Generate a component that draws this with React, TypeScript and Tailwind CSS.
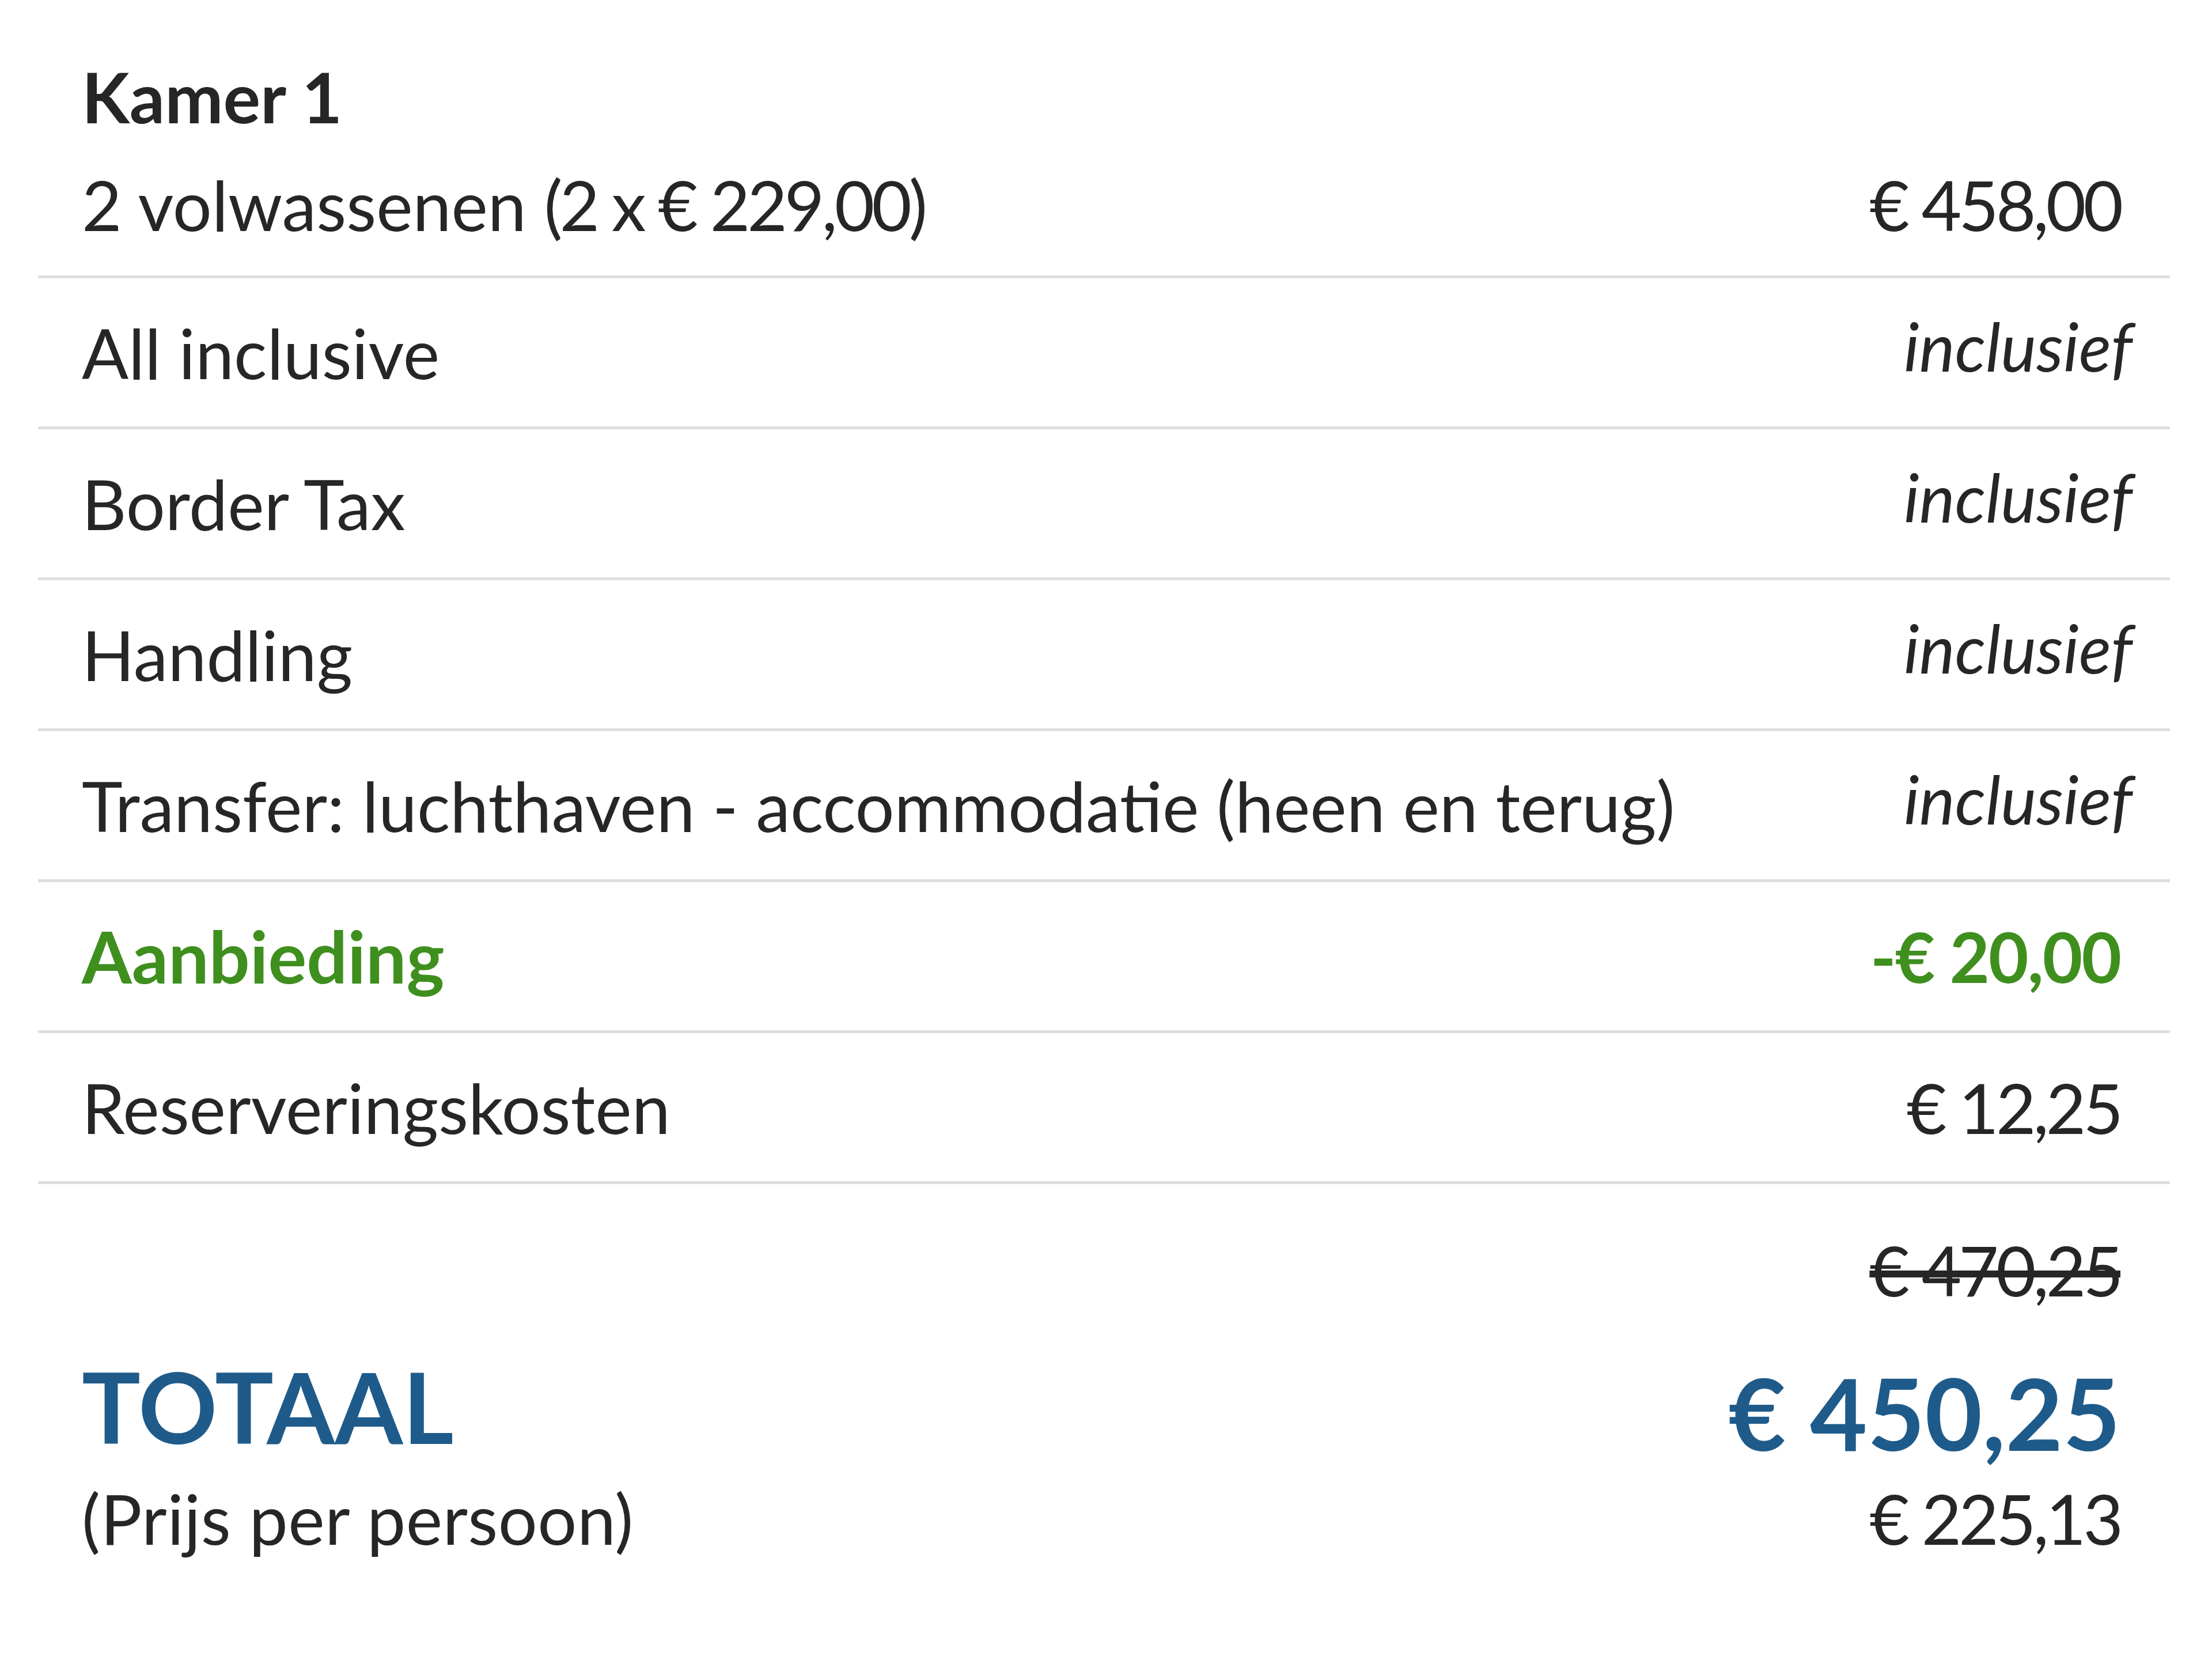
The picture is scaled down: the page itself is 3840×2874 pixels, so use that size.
import React from "react";

const rows: { label: string; value: string; italic?: boolean; green?: boolean }[] = [
  { label: "All inclusive", value: "inclusief", italic: true },
  { label: "Border Tax", value: "inclusief", italic: true },
  { label: "Handling", value: "inclusief", italic: true },
  { label: "Transfer: luchthaven - accommodatie (heen en terug)", value: "inclusief", italic: true },
  { label: "Aanbieding", value: "-€ 20,00", green: true },
  { label: "Reserveringskosten", value: "€ 12,25" },
];

export default function App() {
  return (
    <div className="w-[3840px] h-[2874px] bg-white text-[#262626] font-['Lato',sans-serif] pl-[66px] pr-[73px]">
      <div className="pt-[92px] border-b-[5px] border-[#dedede] pb-[48px] pl-[76px] pr-[86px]">
        <div className="h-[150px] flex items-center text-[121px] font-bold leading-none">Kamer 1</div>
        <div className="mt-[38px] h-[150px] flex items-center justify-between text-[120px] leading-none">
          <span>
            2 volwassenen <span className="tracking-[-5px]">(2 x € 229,00)</span>
          </span>
          <span className="tracking-[-5px]">€ 458,00</span>
        </div>
      </div>
      {rows.map((r) => (
        <div
          key={r.label}
          className={
            "h-[262px] border-b-[5px] border-[#dedede] flex items-center justify-between pl-[76px] pr-[86px] leading-none " +
            (r.green ? "text-[#3f8f1f] font-bold text-[125px]" : "text-[120px]")
          }
        >
          <span>{r.label}</span>
          {r.italic ? (
            <span className="italic text-[117px] mr-[-21px] -mt-[22px]">{r.value}</span>
          ) : r.green ? (
            <span className="text-[120px] tracking-[-2px]">{r.value}</span>
          ) : (
            <span className="tracking-[-5px]">{r.value}</span>
          )}
        </div>
      ))}
      <div className="pl-[76px] pr-[86px]">
        <div className="h-[150px] mt-[74px] flex items-center justify-end text-[120px] leading-none">
          <span className="line-through tracking-[-5px]">€ 470,25</span>
        </div>
        <div className="mt-[76px] h-[170px] flex items-center justify-between">
          <span className="text-[170px] font-bold text-[#1f5b8a] leading-none">TOTAAL</span>
          <span className="text-[172px] font-bold text-[#1f5b8a] leading-none mt-[24px]">€ 450,25</span>
        </div>
        <div className="mt-[35px] h-[150px] flex items-center justify-between text-[120px] leading-none">
          <span className="tracking-[0.5px]">(Prijs per persoon)</span>
          <span className="tracking-[-5px]">€ 225,13</span>
        </div>
      </div>
    </div>
  );
}
